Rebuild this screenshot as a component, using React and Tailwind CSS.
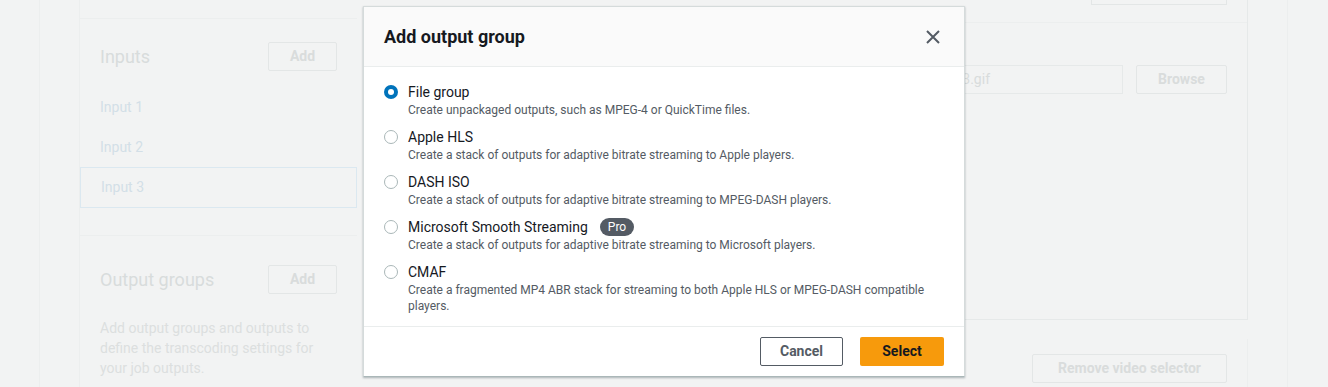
import React, { useState } from "react";

const options = [
  {
    id: "file",
    label: "File group",
    desc: "Create unpackaged outputs, such as MPEG-4 or QuickTime files.",
  },
  {
    id: "hls",
    label: "Apple HLS",
    desc: "Create a stack of outputs for adaptive bitrate streaming to Apple players.",
  },
  {
    id: "dash",
    label: "DASH ISO",
    desc: "Create a stack of outputs for adaptive bitrate streaming to MPEG-DASH players.",
  },
  {
    id: "mss",
    label: "Microsoft Smooth Streaming",
    pro: true,
    desc: "Create a stack of outputs for adaptive bitrate streaming to Microsoft players.",
  },
  {
    id: "cmaf",
    label: "CMAF",
    desc: "Create a fragmented MP4 ABR stack for streaming to both Apple HLS or MPEG-DASH compatible players.",
  },
];

const FadedButton = ({ children, className = "" }) => (
  <div
    className={
      "h-[29px] border border-[#e3e6e6] rounded-[2px] flex items-center justify-center text-[14px] font-bold text-[#d9dcdc] " +
      className
    }
  >
    {children}
  </div>
);

const Background = () => (
  <div className="flex h-[387px] bg-[#f2f3f3] overflow-hidden">
    <div className="w-[40px] border-r border-[#eceeee]" />
    <div className="w-[40px] border-r border-[#eceeee]" />

    {/* left nav panel */}
    <div className="w-[277px] flex flex-col">
      <div className="h-[19px] border-b border-[#eceeee]" />
      <div className="flex items-center justify-between pl-[20px] pr-[20px] pt-[23px]">
        <span className="text-[18px] text-[#d8dcdc]">Inputs</span>
        <FadedButton className="w-[69px]">Add</FadedButton>
      </div>
      <div className="mt-[16px] pl-[20px] h-[40px] flex items-center text-[14px] text-[#d3dfe7]">
        Input 1
      </div>
      <div className="pl-[20px] h-[40px] flex items-center text-[14px] text-[#d3dfe7]">
        Input 2
      </div>
      <div className="h-[41px] flex items-center pl-[20px] text-[14px] text-[#d3dfe7] border border-[#dbe8f0]">
        Input 3
      </div>
      <div className="h-[28px] border-b border-[#eceeee]" />
      <div className="flex items-center justify-between pl-[20px] pr-[20px] pt-[29px]">
        <span className="text-[18px] text-[#d8dcdc]">Output groups</span>
        <FadedButton className="w-[69px]">Add</FadedButton>
      </div>
      <p className="mt-[24px] pl-[20px] pr-[20px] text-[14px] leading-[20px] text-[#dcdfdf]">
        Add output groups and outputs to define the transcoding settings for
        your job outputs.
      </p>
    </div>

    {/* main content */}
    <div className="ml-[11px] flex-1 flex flex-col">
      <div className="h-[320px] border-b border-r border-[#e6e9e9] flex flex-col">
        <div className="h-[23px] border-b border-[#eceeee] flex justify-end pr-[20px]">
          <div className="w-[136px] h-[5px] border border-t-0 border-[#e3e6e6]" />
        </div>
        <div className="flex justify-end items-center gap-[13px] pr-[20px] mt-[42px]">
          <div className="w-[300px] h-[29px] border border-[#e6e9e9] flex items-center justify-end pr-[132px] text-[14px] text-[#d8dcdc]">
            03.gif
          </div>
          <FadedButton className="w-[91px]">Browse</FadedButton>
        </div>
      </div>
      <div className="mt-[19px] flex-1 border-r border-[#eceeee] flex justify-end pt-[15px] pr-[20px]">
        <FadedButton className="w-[195px]">Remove video selector</FadedButton>
      </div>
    </div>

    <div className="w-[40px] border-r border-[#eceeee]" />
    <div className="w-[40px]" />
  </div>
);

const Radio = ({ checked }) =>
  checked ? (
    <span className="w-[14px] h-[14px] rounded-full bg-[#0073bb] flex items-center justify-center shrink-0">
      <span className="w-[6px] h-[6px] rounded-full bg-white" />
    </span>
  ) : (
    <span className="w-[14px] h-[14px] rounded-full border border-[#aab7b8] bg-white shrink-0" />
  );

export default function App() {
  const [selected, setSelected] = useState("file");

  return (
    <div
      className="relative w-[1328px] h-[387px] overflow-hidden"
      style={{ fontFamily: "Roboto, 'Liberation Sans', sans-serif" }}
    >
      <Background />

      {/* modal */}
      <div className="absolute left-[363px] top-[6px] w-[602px] h-[371px] bg-white border border-[#d5dbdb] border-b-[#aab7b8] shadow-[0_1px_2px_rgba(0,28,36,0.3)] flex flex-col">
        <div className="h-[60px] bg-[#fafafa] border-b border-[#eaeded] flex items-center justify-between pl-[20px] pr-[22px]">
          <h2 className="text-[18px] font-bold text-[#16191f]">Add output group</h2>
          <button type="button" className="w-[18px] h-[18px] flex items-center justify-center">
            <svg width="14" height="14" viewBox="0 0 14 14">
              <path d="M1 1L13 13M13 1L1 13" stroke="#545b64" strokeWidth="2" />
            </svg>
          </button>
        </div>

        <div className="flex-1 pl-[20px] pr-[20px] pt-[15px] flex flex-col gap-[9px]">
          {options.map((o) => (
            <label
              key={o.id}
              className="flex cursor-pointer"
              onClick={() => setSelected(o.id)}
            >
              <span className="h-[20px] flex items-center">
                <Radio checked={selected === o.id} />
              </span>
              <span className="ml-[10px] flex flex-col">
                <span className="flex items-center h-[20px] text-[14px] text-[#16191f]">
                  {o.label}
                  {o.pro && (
                    <span className="ml-[12px] h-[18px] px-[8px] rounded-full bg-[#545b64] text-white text-[12px] flex items-center">
                      Pro
                    </span>
                  )}
                </span>
                <span className="text-[12px] leading-[16px] text-[#545b64]">{o.desc}</span>
              </span>
            </label>
          ))}
        </div>

        <div className="h-[50px] border-t border-[#eaeded] flex justify-end items-start gap-[17px] pt-[10px] pr-[20px]">
          <button
            type="button"
            className="w-[83px] h-[29px] border border-[#545b64] rounded-[2px] text-[14px] font-bold text-[#545b64] bg-white"
          >
            Cancel
          </button>
          <button
            type="button"
            className="w-[84px] h-[29px] rounded-[2px] text-[14px] font-bold text-[#16191f] bg-[#f79a0c]"
          >
            Select
          </button>
        </div>
      </div>
    </div>
  );
}
